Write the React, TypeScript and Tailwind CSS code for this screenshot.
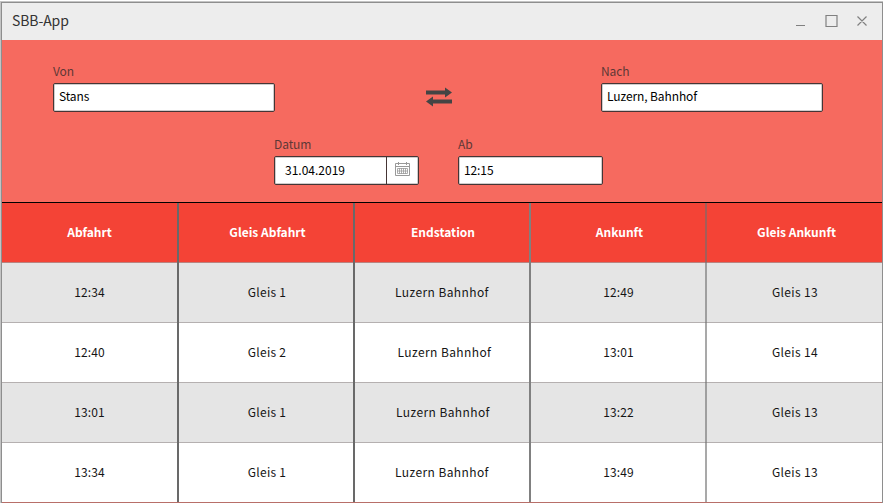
import React from "react";

const columns = [
  { title: "Abfahrt", line: "border-[#696969]", shift: "" },
  { title: "Gleis Abfahrt", line: "border-[#696969]", shift: "pl-[3px]" },
  { title: "Endstation", line: "border-[#808080]", shift: "pl-[2px]" },
  { title: "Ankunft", line: "border-[#707070]/60", shift: "pl-[3px]" },
  { title: "Gleis Ankunft", line: "border-transparent", shift: "pl-[6px]" },
];

const rows = [
  { cells: ["12:34", "Gleis 1", "Luzern Bahnhof", "12:49", "Gleis 13"], shift: "" },
  { cells: ["12:40", "Gleis 2", "Luzern Bahnhof", "13:01", "Gleis 14"], shift: "pl-[5px]" },
  { cells: ["13:01", "Gleis 1", "Luzern Bahnhof", "13:22", "Gleis 13"], shift: "pl-[2px]" },
  { cells: ["13:34", "Gleis 1", "Luzern Bahnhof", "13:49", "Gleis 13"], shift: "" },
];

const cellShift = ["", "pl-[2px]", "", "pl-[1px]", "pl-[3px]"];
const cellTracking = ["tracking-[0.15px]", "tracking-[0.25px]", "tracking-[0.4px]", "tracking-[0.15px]", "tracking-[0.35px]"];

const grid = "grid grid-cols-[177px_176px_176px_176px_175px]";
const label = "h-[20px] text-[12px] leading-[16px] tracking-[-0.1px] text-[#5e3836]";
const box = "rounded-[2px] border border-[#453535] bg-white text-[12px] text-black shadow-[inset_0_0_0_1px_#d0cccc]";

function Field({ name, value, width, size }: { name: string; value: string; width: string; size: string }) {
  return (
    <div className={width}>
      <div className={label}>{name}</div>
      <div className={`${box} ${size} pl-[5px] tracking-[-0.1px]`}>{value}</div>
    </div>
  );
}

function SwapIcon() {
  return (
    <svg width="28" height="20" viewBox="0 0 28 20" fill="#444">
      <path d="M1 3.500h19V.5l7 5-7 5v-3H1z" />
      <path d="M27 16.500H8v3l-7-5 7-5v3h19z" />
    </svg>
  );
}

function CalendarIcon() {
  return (
    <svg className="-mt-[2px]" width="15" height="15" viewBox="0 0 15 15" fill="none" stroke="#999" strokeWidth="1">
      <path d="M.5 1.500h14v12H.5zM.5 4.500h14M3.500 0v3M11.500 0v3" />
      <path d="M2.500 6.500h10v5h-10zM4.500 6v6M6.500 6v6M8.500 6v6M10.500 6v6M2 9h11" strokeWidth=".8" />
    </svg>
  );
}

export default function App() {
  return (
    <div className="h-[503px] w-[883px] overflow-hidden bg-white pt-px font-['Noto_Sans_CJK_SC','Noto_Sans',sans-serif]">
      <div className="h-[502px] border-t border-l border-[#c4c4c4]">
        <div className="flex h-[501px] flex-col border-t border-r border-l border-[#8e8e8e]">
          <header className="flex h-[37px] shrink-0 items-center justify-between bg-[#ededed] pr-[14px] pl-[10px]">
            <h1 className="-mt-[3px] text-[14px] leading-[20px] tracking-[-0.1px] text-[#333]">SBB-App</h1>
            <svg width="73" height="14" viewBox="0 0 73 14" fill="none" stroke="#808080" strokeWidth="1.2">
              <path d="M1 10.500h9M31 .5h11v11H31zM62.500 1.500l9 9M71.500 1.500l-9 9" />
            </svg>
          </header>

          <section className="h-[162px] shrink-0 bg-[#f66a5f] pt-[23px]">
            <div className="flex justify-between pr-[59px] pl-[51px]">
              <Field name="Von" value="Stans" width="w-[222px]" size="h-[29px] leading-[24px]" />
              <div className="pt-[24px] pl-[2px]"><SwapIcon /></div>
              <Field name="Nach" value="Luzern, Bahnhof" width="w-[222px]" size="h-[29px] leading-[24px]" />
            </div>
            <div className="mt-[24px] flex gap-[39px] pl-[272px]">
              <div className="w-[145px]">
                <div className={label}>Datum</div>
                <div className={`${box} flex h-[29px] leading-[25px]`}>
                  <span className="w-[112px] border-r border-[#453535] pl-[10px]">31.04.2019</span>
                  <span className="flex flex-1 items-center justify-center"><CalendarIcon /></span>
                </div>
              </div>
              <Field name="Ab" value="12:15" width="w-[145px]" size="h-[29px] leading-[25px]" />
            </div>
          </section>

          <section className="flex-1 border-t border-b border-t-black border-b-[#b86f69] text-center text-[12px] leading-[57px]">
            <div className={`${grid} h-[60px] border-b border-[#b98380] bg-[#f44336] font-bold text-white`}>
              {columns.map((c) => (
                <div key={c.title} className={`-mb-px border-r-2 ${c.line} ${c.shift}`}>{c.title}</div>
              ))}
            </div>
            {rows.map((r, i) => (
              <div key={i} className={`${grid} border-[#b5b0b0] text-[#151515] ${i < 3 ? "h-[60px] border-b" : "h-[59px]"} ${i % 2 === 0 ? "bg-[#e5e5e5]" : "bg-white"}`}>
                {r.cells.map((cell, j) => (
                  <div key={j} className={`border-r-2 ${i < 3 ? "-mb-px" : ""} ${columns[j].line} ${cellTracking[j]} ${j === 2 ? r.shift : cellShift[j]}`}>{cell}</div>
                ))}
              </div>
            ))}
          </section>
        </div>
      </div>
    </div>
  );
}
